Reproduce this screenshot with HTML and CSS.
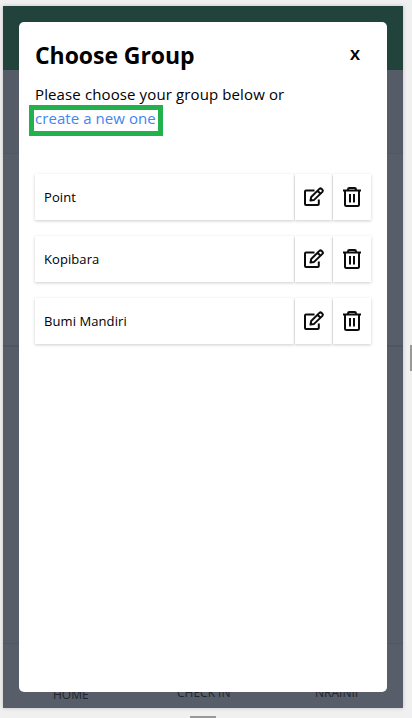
FILE: index.html
```html
<!DOCTYPE html>
<html lang="en">
<head>
<meta charset="utf-8">
<title>Choose Group</title>
<link rel="stylesheet" href="styles.css">
</head>
<body>
<svg class="defs" aria-hidden="true">
  <symbol id="edit" viewBox="0 0 22 22"><path d="M11.5 4.5H3Q2 4.5 2 5.5V18Q2 19 3 19H14.8Q15.8 19 15.8 18V13.5M7.5 14.5l.7-3.5L16.4 2.9q1.1-1 2.2 0l.8.8q1 1.1 0 2.2L11.1 13.9zM14.5 4.8l3 3"/></symbol>
  <symbol id="trash" viewBox="0 0 22 22"><path d="M2 4.5H20M4 4.5V18.5Q4 20 5.5 20H16.5Q18 20 18 18.5V4.5M7 4.2V3.4Q7 2 8.4 2H13.6Q15 2 15 3.4V4.2M9 8V16.5M13 8V16.5"/></symbol>
</svg>
<div class="phone">
  <div class="topbar"></div>
  <div class="panel first"></div>
  <div class="panel second"></div>
  <div class="panel third"></div>
  <nav class="tabs"><span class="home">HOME</span><span class="check">CHECK IN</span><span class="rank">NRAINII</span></nav>
  <section class="modal">
    <header class="head"><h1>Choose Group</h1><button class="close">X</button></header>
    <p class="intro">Please choose your group below or <a class="create">create a new one</a></p>
    <ul class="groups">
      <li><span class="name">Point</span><button><svg><use href="#edit"/></svg></button><button><svg><use href="#trash"/></svg></button></li>
      <li><span class="name">Kopibara</span><button><svg><use href="#edit"/></svg></button><button><svg><use href="#trash"/></svg></button></li>
      <li><span class="name">Bumi Mandiri</span><button><svg><use href="#edit"/></svg></button><button><svg><use href="#trash"/></svg></button></li>
    </ul>
  </section>
</div>
<i class="handle side"></i>
<i class="handle bottom"></i>
</body>
</html>
```
FILE: styles.css
```css
* { box-sizing: border-box; }
body {
  margin: 0;
  height: 718px;
  padding: 6px 0 0 3px;
  overflow: hidden;
  position: relative;
  background: #f0f0f0;
  color: #000;
  font-family: "Open Sans", "Noto Sans", sans-serif;
}
.defs { position: absolute; width: 0; height: 0; }
.phone {
  position: relative;
  display: flex;
  flex-direction: column;
  width: 400px;
  height: 702px;
  background: #575d69;
  box-shadow: 0 0 4px rgba(0, 0, 0, .2);
}
.topbar { height: 64px; background: #22433c; }
.panel { border-bottom: 1px solid #525863; }
.first { height: 84px; background: #555b67; }
.second { height: 193px; background: #575e6a; border-bottom: 2px solid #505661; }
.third { height: 297px; background: #565c68; }
.tabs {
  flex: 1;
  display: flex;
  align-items: flex-end;
  padding: 0 40px 4px 50px;
  font-size: 12px;
  line-height: 18px;
  color: #20242c;
}
.home { width: 124px; }
.check { width: 138px; padding-bottom: 2px; }
.rank { padding-bottom: 2px; }
.modal {
  position: absolute;
  inset: 16px;
  padding: 16px;
  background: #fff;
  border-radius: 5px;
}
.head { display: flex; justify-content: space-between; height: 44px; }
h1 { margin: 0; font-size: 23px; line-height: 34px; font-weight: 700; letter-spacing: -.06px; white-space: nowrap; }
button { border: 0; padding: 0; background: none; font: inherit; color: inherit; }
.close { width: 32px; height: 32px; font-size: 15px; font-weight: 700; }
.intro { margin: 0; font-size: 15px; line-height: 24px; letter-spacing: .12px; white-space: nowrap; }
.create {
  color: #4285f4;
  display: block;
  margin: -1px 0 0 -6px;
  padding: 0 2px 0 1px;
  border: 5px solid #22b14c;
  line-height: 17px;
  height: 31px;
  width: 134px;
  letter-spacing: .06px;
}
.groups {
  list-style: none;
  margin: 38px 0 0;
  padding: 0;
  display: flex;
  flex-direction: column;
  gap: 16px;
}
.groups li {
  display: grid;
  grid-template-columns: 259px 37px 38px;
  gap: 1px;
  height: 46px;
  font-size: 13px;
  letter-spacing: .08px;
}
.groups li > * { display: flex; align-items: center; background: #fff; box-shadow: 0 1px 3px rgba(0, 0, 0, .2); }
.name { padding-left: 9px; }
.groups button { justify-content: center; }
.groups svg { width: 22px; height: 22px; fill: none; stroke: #0c0c0c; stroke-width: 2; stroke-linejoin: round; }
.handle { position: absolute; background: #999; }
.side { right: 0; top: 345px; width: 2px; height: 26px; }
.bottom { left: 190px; bottom: 0; width: 26px; height: 2px; }
```
